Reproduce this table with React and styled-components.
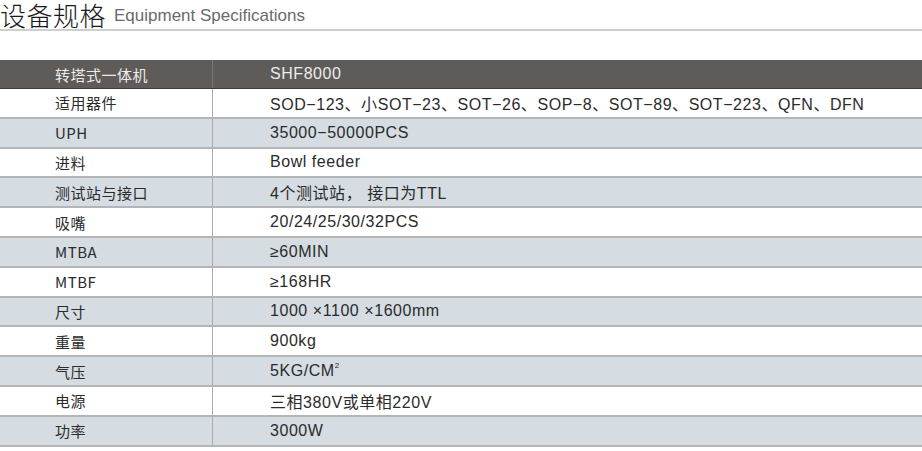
import React from "react";
import styled, { createGlobalStyle } from "styled-components";

const Global = createGlobalStyle`
  body {
    margin: 0;
    background: #fff;
    font-family: "Liberation Sans", "Noto Sans CJK SC", sans-serif;
  }
`;

const Page = styled.div`
  width: 922px;
  height: 451px;
  overflow: hidden;
`;

const TitleBar = styled.div`
  display: flex;
  align-items: flex-end;
  gap: 8px;
  height: 29px;
  border-bottom: 2px solid #cfcfcf;
`;

const TitleCn = styled.h1`
  margin: 0;
  font-family: "Noto Sans CJK SC", sans-serif;
  font-weight: 300;
  font-size: 26px;
  line-height: 29px;
  color: #1a1a1a;
  letter-spacing: 0.5px;
`;

const TitleEn = styled.span`
  font-size: 17px;
  line-height: 24px;
  color: #6a6a6a;
  padding-bottom: 1px;
`;

const Table = styled.div`
  margin-top: 29px;
  display: flex;
  flex-direction: column;
`;

const Row = styled.div`
  display: flex;
  flex-shrink: 0;
  height: ${(p) => (p.$head ? "29px" : "29.8px")};
  box-sizing: border-box;
  background: ${(p) => (p.$head ? "#5f5b59" : p.$alt ? "#d5dce2" : "#ffffff")};
  border-bottom: ${(p) => (p.$head ? "1px solid #3e3b3a" : "2px solid #b3b5b7")};
  color: ${(p) => (p.$head ? "#ececec" : "#2b2b2b")};
  font-size: 16px;
`;

const Label = styled.div`
  width: 213px;
  box-sizing: border-box;
  padding-left: 55px;
  display: flex;
  align-items: center;
  border-right: 1.5px solid ${(p) => (p.$head ? "#7a7674" : "#a9abad")};
  font-family: "Noto Sans CJK SC", "Liberation Sans", sans-serif;
  font-size: 15px;
  letter-spacing: 0.5px;
`;

const Value = styled.div`
  flex: 1;
  padding-left: 57px;
  display: flex;
  align-items: center;
  white-space: nowrap;
  letter-spacing: 0.55px;
`;

const Sup = styled.sup`
  font-size: 8px;
  line-height: 0;
  vertical-align: 8px;
`;

const specs = [
  ["适用器件", "SOD−123、小SOT−23、SOT−26、SOP−8、SOT−89、SOT−223、QFN、DFN"],
  ["UPH", "35000−50000PCS"],
  ["进料", "Bowl  feeder"],
  ["测试站与接口", "4个测试站， 接口为TTL"],
  ["吸嘴", "20/24/25/30/32PCS"],
  ["MTBA", "≥60MIN"],
  ["MTBF", "≥168HR"],
  ["尺寸", "1000 ×1100 ×1600mm"],
  ["重量", "900kg"],
  ["气压", <>5KG/CM<Sup>2</Sup></>],
  ["电源", "三相380V或单相220V"],
  ["功率", "3000W"],
];

export default function App() {
  return (
    <Page>
      <Global />
      <TitleBar>
        <TitleCn>设备规格</TitleCn>
        <TitleEn>Equipment Specifications</TitleEn>
      </TitleBar>
      <Table>
        <Row $head>
          <Label $head>转塔式一体机</Label>
          <Value>SHF8000</Value>
        </Row>
        {specs.map(([k, v], i) => (
          <Row key={k} $alt={i % 2 === 1}>
            <Label>{k}</Label>
            <Value>
              <span>{v}</span>
            </Value>
          </Row>
        ))}
      </Table>
    </Page>
  );
}
